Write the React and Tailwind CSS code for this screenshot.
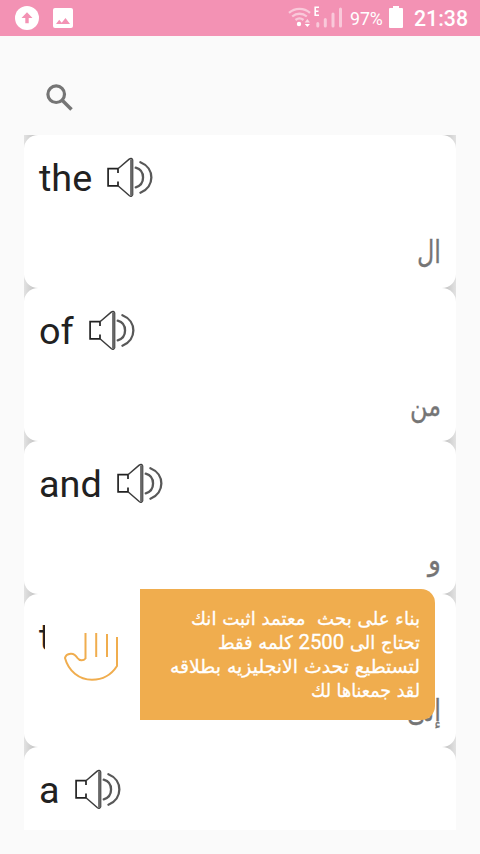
import React from "react";

function Speaker() {
  return (
    <svg className="ml-[15px] h-[43px] w-[48px] shrink-0" viewBox="0 0 48 43" fill="none" stroke="#3c3c3c">
      <path d="M11 16V11.7H1.1V28.8H11V24.5" strokeWidth="1.7" stroke="#222" />
      <path d="M11 11.7L22.2 2.2Q24.6 .5 25.6 3V37.7Q24.6 40.3 22.2 38.5L11 28.8" strokeWidth="1.5" />
      <path d="M24.4 2.5V38.5" strokeWidth="2.6" stroke="#686868" />
      <path d="M28.7 10.7C38.5 13.5 38.5 27.5 28.7 30.3M33.4 5.2C48 11 48 30 33.4 35.7" strokeWidth="2.3" stroke="#585858" strokeLinecap="round" />
    </svg>
  );
}

function ArabicText({ text, width, size, height, baseline, children }) {
  return (
    <svg width={width} height={height} className="block overflow-visible" fill="currentColor" stroke="currentColor" strokeWidth="0.3">
      <text x={width} y={baseline} direction="rtl" textAnchor="start" fontSize={size} textLength={width} lengthAdjust="spacingAndGlyphs" xmlSpace="preserve">{children || text}</text>
    </svg>
  );
}

const words = [
  { en: "the", ar: "ال", width: 24, size: 31, baseline: 42 },
  { en: "of", ar: "من", width: 31, size: 29, baseline: 42 },
  { en: "and", ar: "و", width: 13, size: 29, baseline: 43 },
  { en: "to", ar: "إلى", width: 34, size: 30, baseline: 41 },
  { en: "a", ar: "" },
];

const lines = [
  { text: "بناء على بحث  معتمد اثبت انك", width: 229 },
  { before: "تحتاج الى ", number: "2500", after: " كلمه فقط", width: 202 },
  { text: "لتستطيع تحدث الانجليزيه بطلاقه", width: 250 },
  { text: "لقد جمعناها لك", width: 109 },
];

function StatusBar() {
  return (
    <header className="flex h-9 items-center bg-[#f392b4] text-white">
      <svg className="ml-[15px] h-6 w-6" viewBox="0 0 24 24">
        <circle cx="12" cy="12" r="12" fill="white" />
        <path d="M12 6.2L17.5 11.9H13.7V17.2H10.3V11.9H6.5Z" fill="#f392b4" />
      </svg>
      <svg className="ml-[14px] h-5 w-5" viewBox="0 0 20 20">
        <rect width="20" height="20" rx="2" fill="white" />
        <path d="M3 16L6.2 11.8L8.7 14.7L12.5 10L17 16Z" fill="#f392b4" />
      </svg>
      <svg className="ml-auto h-[30px] w-[56px]" viewBox="0 0 56 30" fill="none">
        <g stroke="white" strokeOpacity=".5" strokeWidth="2.3">
          <path d="M1 9.8C7 4.5 16 4.5 22 9.8M4.2 13.5C8.5 9.8 14.5 9.8 18.8 13.5M7.5 17C10 14.9 13 14.9 15.5 17" />
        </g>
        <circle cx="11" cy="21" r="2.2" fill="white" />
        <path d="M16.7 19.4L19.4 16L22 19.4Z" fill="white" fillOpacity=".65" />
        <path d="M16.7 20.9H22L19.4 23.9Z" fill="white" />
        <path d="M31 4.2H27.2V12.3H31M27.2 8.2H30.5" stroke="white" strokeWidth="1.6" />
        <path d="M29.8 20.5V23M37.3 16.5V23M45 11V23M52.5 6V23" stroke="white" strokeOpacity=".5" strokeWidth="3" strokeLinecap="round" />
      </svg>
      <span className="ml-[6px] w-[33px] pt-[2px] text-[17.8px] leading-none tracking-[-0.1px] whitespace-nowrap">97%</span>
      <svg className="mb-[2px] ml-[6px] h-[22px] w-[14px]" viewBox="0 0 14 22"><path d="M4 0H10V2H13Q14 2 14 3V21Q14 22 13 22H1Q0 22 0 21V3Q0 2 1 2H4Z" fill="white" /></svg>
      <span className="ml-[11px] w-[66px] pt-[2px] text-[21.3px] font-medium leading-none whitespace-nowrap">21:38</span>
    </header>
  );
}

export default function App() {
  return (
    <div className="relative h-[854px] w-[480px] overflow-hidden bg-[#fafafa] font-['Roboto','DejaVu_Sans',sans-serif]">
      <StatusBar />
      <div className="flex h-[99px] items-start pt-[48px] pl-[46px]">
        <svg className="h-[28px] w-[28px]" viewBox="0 0 28 28" fill="none" stroke="#757575" strokeWidth="3.2">
          <circle cx="10.2" cy="10.2" r="8.3" /><path d="M16.2 16.2L25.5 25.5" strokeWidth="3.5" />
        </svg>
      </div>
      <main className="mx-6 flex h-[695px] flex-col overflow-hidden bg-[linear-gradient(90deg,#e2e2e2,#bcbcbc_14px,#bcbcbc_418px,#e2e2e2)]">
        {words.map((word) => (
          <article key={word.en} className="flex h-[153px] shrink-0 flex-col rounded-[14px] bg-white px-[15px]">
            <div className="flex h-[86px] items-center text-[37.8px] leading-none text-[#212121]">
              <span className="pt-[2px]">{word.en}</span><Speaker />
            </div>
            <div dir="rtl" className="flex font-['DejaVu_Sans',sans-serif] text-[#757575]">
              {word.ar && <ArabicText text={word.ar} width={word.width} size={word.size} height={60} baseline={word.baseline} />}
            </div>
          </article>
        ))}
      </main>
      <aside className="absolute top-[589px] left-[45px] flex h-[131px] w-[390px]">
        <div className="flex w-[95px] bg-white pt-[38px] pl-[17px]">
          <svg className="h-[58px] w-[60px]" viewBox="0 0 60 58" fill="none" stroke="#f0ad4e" strokeWidth="2">
            <path d="M23.5 6V31.5C21.5 34 17.5 34 15.5 31C13 27 11 26.5 8.7 26.7C6 27 3.5 28 3 31C6.5 44 17 52.7 30 52.7C42 52.7 50.5 46 55 39V10" />
            <path d="M34.2 6V30M45 7V30" />
          </svg>
        </div>
        <div className="w-[295px] rounded-r-[14px] bg-[#f0ad4e] px-[15px] pt-[18px] font-['DejaVu_Sans',sans-serif] text-white" dir="rtl">
          {lines.map((line) => (
            <ArabicText key={line.width} text={line.text} width={line.width} size={18.5} height={24} baseline={18}>
              {line.number && <>{line.before}<tspan fontFamily="Roboto" fontSize="21">{line.number}</tspan>{line.after}</>}
            </ArabicText>
          ))}
        </div>
      </aside>
    </div>
  );
}
